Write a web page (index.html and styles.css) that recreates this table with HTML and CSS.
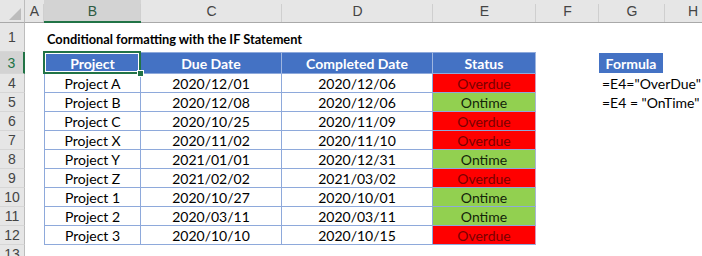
FILE: index.html
```html
<!DOCTYPE html>
<html>
<head>
<meta charset="utf-8">
<link rel="stylesheet" href="styles.css">
</head>
<body>
<div class="sheet">
  <div class="row hdr">
    <div class="corner"><span class="tri"></span></div>
    <div class="ch">A</div>
    <div class="ch sel">B</div>
    <div class="ch">C</div>
    <div class="ch">D</div>
    <div class="ch">E</div>
    <div class="ch">F</div>
    <div class="ch">G</div>
    <div class="ch">H</div>
  </div>
  <div class="row r1">
    <div class="rh">1</div>
    <div class="c"></div>
    <div class="c title">Conditional formatting with the IF Statement</div>
  </div>
  <div class="row r3">
    <div class="rh sel">3</div>
    <div class="c"></div>
    <div class="th first top selcell">Project</div>
    <div class="th top">Due Date</div>
    <div class="th top">Completed Date</div>
    <div class="th top">Status</div>
    <div class="c"></div>
    <div class="fh">Formula</div>
    <div class="c"></div>
  </div>
  <div class="row">
    <div class="rh">4</div><div class="c"></div>
    <div class="td first">Project A</div><div class="td">2020/12/01</div><div class="td">2020/12/06</div><div class="td over">Overdue</div>
    <div class="c"></div><div class="fx">=E4="OverDue"</div>
  </div>
  <div class="row">
    <div class="rh">5</div><div class="c"></div>
    <div class="td first">Project B</div><div class="td">2020/12/08</div><div class="td">2020/12/06</div><div class="td ontime">Ontime</div>
    <div class="c"></div><div class="fx">=E4 = "OnTime"</div>
  </div>
  <div class="row">
    <div class="rh">6</div><div class="c"></div>
    <div class="td first">Project C</div><div class="td">2020/10/25</div><div class="td">2020/11/09</div><div class="td over">Overdue</div>
  </div>
  <div class="row">
    <div class="rh">7</div><div class="c"></div>
    <div class="td first">Project X</div><div class="td">2020/11/02</div><div class="td">2020/11/10</div><div class="td over">Overdue</div>
  </div>
  <div class="row">
    <div class="rh">8</div><div class="c"></div>
    <div class="td first">Project Y</div><div class="td">2021/01/01</div><div class="td">2020/12/31</div><div class="td ontime">Ontime</div>
  </div>
  <div class="row">
    <div class="rh">9</div><div class="c"></div>
    <div class="td first">Project Z</div><div class="td">2021/02/02</div><div class="td">2021/03/02</div><div class="td over">Overdue</div>
  </div>
  <div class="row">
    <div class="rh">10</div><div class="c"></div>
    <div class="td first">Project 1</div><div class="td">2020/10/27</div><div class="td">2020/10/01</div><div class="td ontime">Ontime</div>
  </div>
  <div class="row">
    <div class="rh">11</div><div class="c"></div>
    <div class="td first">Project 2</div><div class="td">2020/03/11</div><div class="td">2020/03/11</div><div class="td ontime">Ontime</div>
  </div>
  <div class="row">
    <div class="rh">12</div><div class="c"></div>
    <div class="td first">Project 3</div><div class="td">2020/10/10</div><div class="td">2020/10/15</div><div class="td over">Overdue</div>
  </div>
  <div class="row">
    <div class="rh">13</div>
  </div>
</div>
</body>
</html>
```
FILE: styles.css
```css
html, body {
  margin: 0;
  padding: 0;
  overflow: hidden;
  background: #fff;
}
.sheet {
  width: 721px;
  font-family: "Lato", "Liberation Sans", sans-serif;
  font-size: 14px;
  color: #000;
}
.row {
  display: grid;
  grid-template-columns: 25px 19px 97px 141px 151px 103px 63px 66px 56px;
  height: 19px;
}
.row.hdr { height: 23px; }
.row.r1 { height: 29px; }
.row.r3 { height: 22px; }
.row > div {
  box-sizing: border-box;
  display: flex;
  align-items: center;
  justify-content: center;
  white-space: nowrap;
  min-width: 0;
}
.corner {
  background: #e6e6e6;
  border-right: 1px solid #bdbdbd;
  border-bottom: 1px solid #a9a9a9;
  position: relative;
}
.tri {
  position: absolute;
  right: 3px;
  bottom: 2px;
  width: 0;
  height: 0;
  border-left: 12px solid transparent;
  border-bottom: 12px solid #bcbcbc;
}
.ch {
  background: #e6e6e6;
  color: #444;
  font-family: "Liberation Sans", sans-serif;
  font-size: 14px;
  border-bottom: 1px solid #a9a9a9;
  position: relative;
}
.ch::after {
  content: "";
  position: absolute;
  right: 0;
  top: 4px;
  bottom: 0;
  width: 1px;
  background: #cfcfcf;
}
.ch.sel {
  background: #d3d3d3;
  color: #2d5a42;
  border-bottom: 2px solid #217346;
}
.rh {
  background: #e6e6e6;
  color: #444;
  font-family: "Liberation Sans", sans-serif;
  font-size: 14px;
  border-right: 1px solid #bdbdbd;
  border-bottom: 1px solid #d6d6d6;
}
.rh.sel {
  background: #d3d3d3;
  color: #217346;
  border-right: 2px solid #217346;
}
.title {
  grid-column: 3 / 8;
  justify-content: flex-start !important;
  padding-left: 3px;
  padding-top: 2px;
  font-weight: 700;
  font-size: 12.8px;
}
.th, .td {
  border-right: 1px solid #8ea9db;
  border-bottom: 1px solid #8ea9db;
}
.first { border-left: 1px solid #8ea9db; }
.top { border-top: 1px solid #8ea9db; }
.th {
  background: #4472c4;
  color: #fff;
  font-weight: 700;
  border-right-color: #9fb6e0;
}
.selcell { position: relative; }
.selcell::after {
  content: "";
  position: absolute;
  left: -2px;
  top: -2px;
  right: -1px;
  bottom: -1px;
  border: 2px solid #217346;
  box-shadow: inset 0 0 0 1px #fff;
}
.selcell::before {
  content: "";
  position: absolute;
  right: -4px;
  bottom: -4px;
  width: 5px;
  height: 5px;
  background: #217346;
  border: 1px solid #fff;
  z-index: 2;
}
.over {
  background: #ff0000;
  color: #7a0000;
  border-right-color: #d79ab8;
}
.ontime {
  background: #92d050;
  color: #14240a;
  border-right-color: #a7b8d6;
}
.fh {
  background: #4472c4;
  color: #fff;
  font-weight: 700;
  margin: 1px 2px 1px 0;
}
.fx {
  justify-content: flex-start !important;
  padding-left: 3px;
  overflow: visible;
  grid-column: 8 / 10;
}
```
